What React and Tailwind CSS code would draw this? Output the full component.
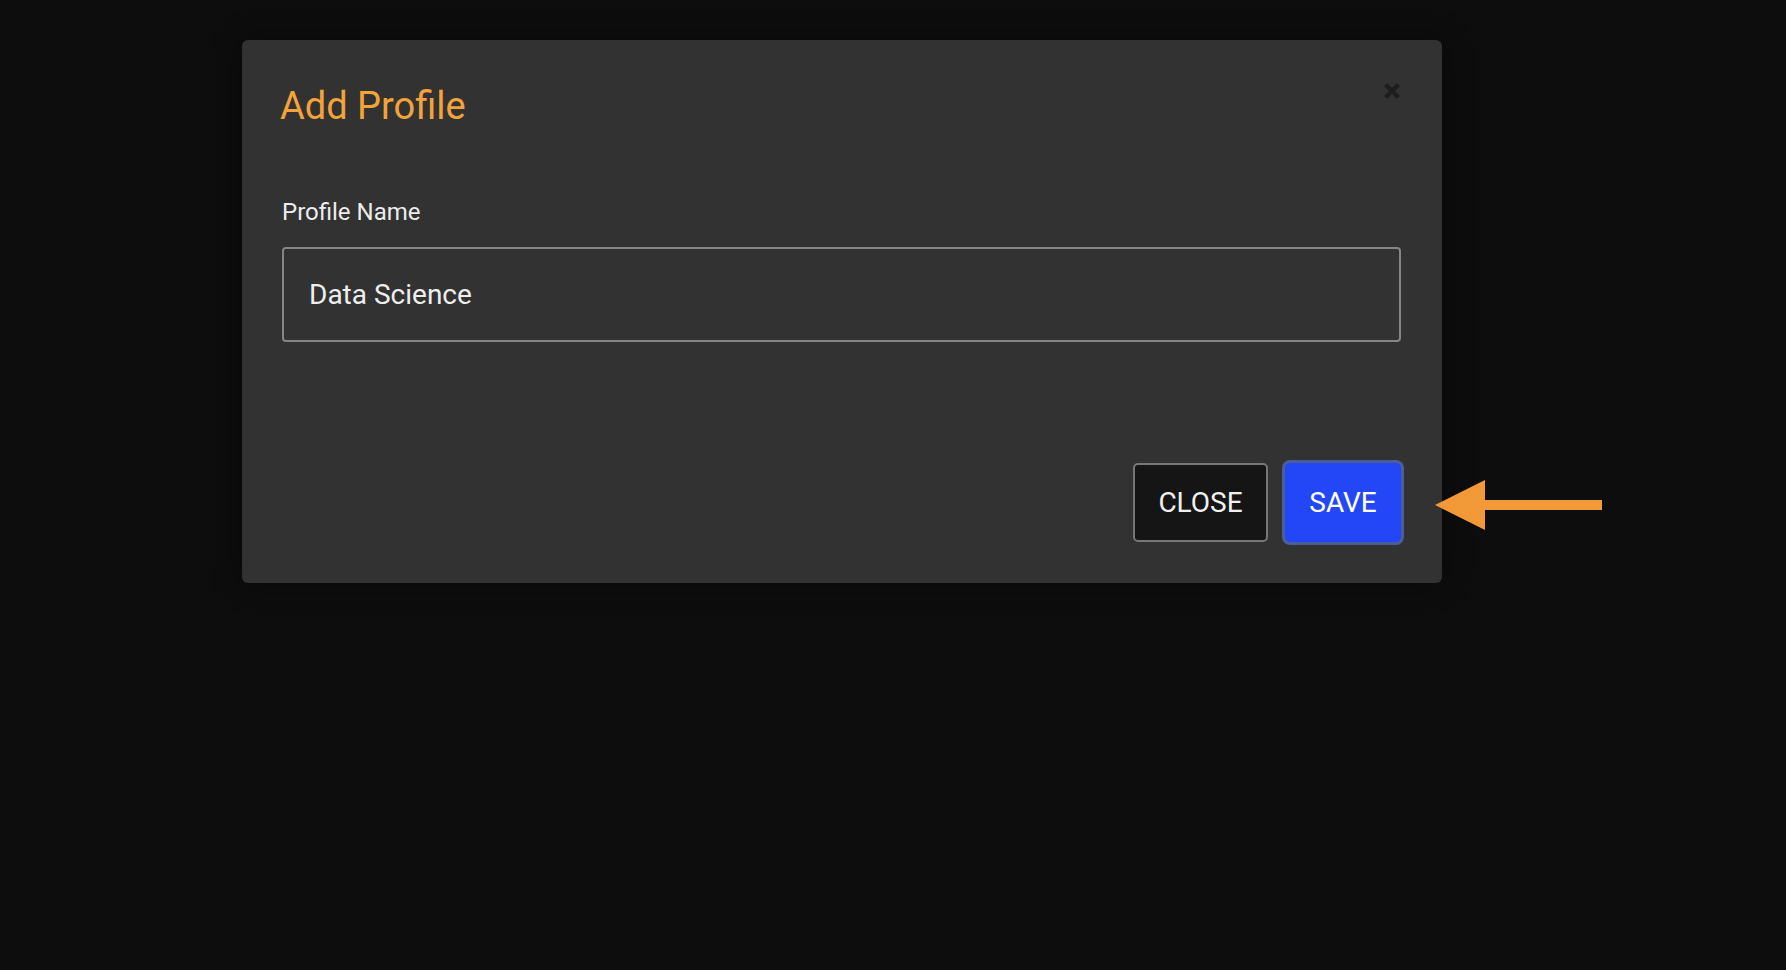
import React from "react";

export default function App() {
  return (
    <div
      className="relative min-h-screen w-full bg-[#0d0d0d] pl-[242px] pt-[40px]"
      style={{ fontFamily: "Roboto, 'Liberation Sans', sans-serif" }}
    >
      {/* MODAL */}
      <div className="w-[1200px] rounded-[6px] bg-[#323232] pl-[40px] pr-[41px] pt-[48px] pb-[41px] shadow-[0_0_30px_rgba(0,0,0,0.4)]">
        <div className="flex items-start justify-between">
          <h2 className="-ml-[2px] -mt-[1px] text-[38px] leading-none font-normal text-[#f2a33a]">Add Profile</h2>
          <button className="-mt-[6px] flex h-[18px] w-[18px] items-center justify-center text-[#1d1d1d]">
            <svg viewBox="0 0 18 18" className="h-[18px] w-[18px]">
              <path d="M2.5 2.5 L15.5 15.5 M15.5 2.5 L2.5 15.5" stroke="currentColor" strokeWidth="4.4" strokeLinecap="butt" fill="none" />
            </svg>
          </button>
        </div>

        <label className="mt-[75px] block text-[24px] leading-none text-[#ececec]">Profile Name</label>
        <div className="mt-[23px] flex h-[95px] items-center rounded-[4px] border-2 border-[#858585] pl-[25px]">
          <span className="text-[28px] leading-none text-[#eeeeee]">Data Science</span>
        </div>

        {/* ACTIONS */}
        <div className="mt-[121px] flex justify-end gap-[17px]">
          <button className="flex h-[79px] w-[135px] items-center justify-center rounded-[5px] border-2 border-[#777777] bg-[#151515] text-[28px] leading-none text-[#f0f0f0]">
            CLOSE
          </button>
          <button className="flex h-[79px] w-[116px] items-center justify-center rounded-[5px] bg-[#2347f7] text-[28px] leading-none text-white ring-[3px] ring-[#4b5e98]">
            SAVE
          </button>
        </div>
      </div>

      {/* ANNOTATION ARROW */}
      <svg className="absolute left-[1435px] top-[480px]" width="167" height="50" viewBox="0 0 167 50">
        <polygon points="0,25 50,0 50,50" fill="#f39a38" />
        <rect x="49" y="20" width="118" height="10" fill="#f39a38" />
      </svg>
    </div>
  );
}
